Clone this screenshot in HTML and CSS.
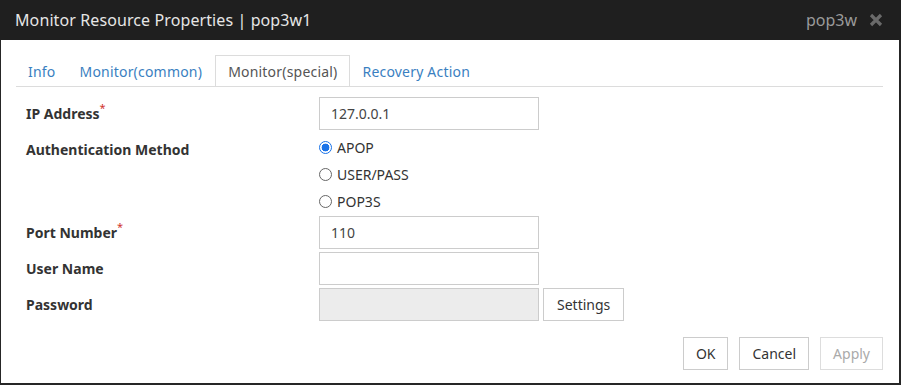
FILE: index.html
```html
<!DOCTYPE html>
<html lang="en">
<head>
    <meta charset="UTF-8">
    <title>Monitor Resource Properties</title>
    <link rel="stylesheet" href="styles.css">
</head>
<body>
	<div class="dialog">
		<div class="titleBar">
			<span class="titleText">Monitor Resource Properties | pop3w1</span>
			<span class="titleRight">
				<span class="resName">pop3w</span>
				<svg class="closeIcon" width="14" height="14" viewBox="0 0 14 14">
					<path d="M2 2 L12 12 M12 2 L2 12" stroke="#6a6a6a" stroke-width="3.2" stroke-linecap="butt"/>
				</svg>
			</span>
		</div>
		<div class="dialogBody">
			<ul class="tabs">
				<li class="tab">Info</li>
				<li class="tab">Monitor(common)</li>
				<li class="tab active">Monitor(special)</li>
				<li class="tab">Recovery Action</li>
			</ul>
			<div class="form">
				<div class="row">
					<label class="lbl">IP Address<sup class="req">*</sup></label>
					<div class="field"><div class="input">127.0.0.1</div></div>
				</div>
				<div class="row radioRow">
					<label class="lbl">Authentication Method</label>
					<div class="field radios">
						<div class="radio"><span class="dot checked"></span>APOP</div>
						<div class="radio"><span class="dot"></span>USER/PASS</div>
						<div class="radio"><span class="dot"></span>POP3S</div>
					</div>
				</div>
				<div class="row">
					<label class="lbl">Port Number<sup class="req">*</sup></label>
					<div class="field"><div class="input">110</div></div>
				</div>
				<div class="row">
					<label class="lbl">User Name</label>
					<div class="field"><div class="input"></div></div>
				</div>
				<div class="row">
					<label class="lbl">Password</label>
					<div class="field">
						<div class="input disabled"></div>
						<button class="btn">Settings</button>
					</div>
				</div>
			</div>
			<div class="footer">
				<button class="btn">OK</button>
				<button class="btn">Cancel</button>
				<button class="btn off">Apply</button>
			</div>
		</div>
	</div>
</body>
</html>
```

FILE: styles.css
```css
body,html{
	margin: 0;
	padding: 0;
	background: #fff;
	font-family: "Noto Sans", "Open Sans", sans-serif;
	font-size: 14px;
	color: #333;
}
.dialog{
	width: 901px;
	height: 385px;
	box-sizing: border-box;
	border-left: 1px solid #262626;
	border-right: 2px solid #262626;
	border-bottom: 2px solid #262626;
	background: #fff;
}
.titleBar{
	height: 40px;
	background: #1f1f1f;
	display: flex;
	align-items: center;
	justify-content: space-between;
	padding: 0 18px 0 15px;
	margin-left: -1px;
	margin-right: -2px;
}
.titleText{
	color: #e6e6e6;
	font-size: 16px;
	letter-spacing: 0.1px;
}
.titleRight{
	display: flex;
	align-items: center;
	gap: 12px;
}
.resName{
	color: #9a9a9a;
	font-size: 16px;
}
.closeIcon{
	display: block;
}
.dialogBody{
	padding: 15px 16px 0 15px;
}
.tabs{
	list-style: none;
	margin: 0;
	padding: 0;
	display: flex;
	border-bottom: 1px solid #dcdcdc;
	height: 31px;
}
.tab{
	padding: 0 11px;
	line-height: 28px;
	margin-top: 2px;
	color: #3a7fc1;
	letter-spacing: 0.2px;
	border: 1px solid transparent;
	border-bottom: none;
}
.tab.active{
	color: #555;
	background: #fff;
	border-color: #dcdcdc;
	height: 30px;
	margin-top: 0;
	line-height: 32px;
	margin-left: 1px;
	padding: 0 12px;
}
.form{
	margin-top: 10px;
	padding-left: 10px;
}
.row{
	display: flex;
	align-items: flex-start;
	margin-bottom: 3px;
}
.lbl{
	width: 293px;
	font-weight: bold;
	line-height: 33px;
	height: 33px;
}
.req{
	color: #d0342c;
	font-size: 11px;
	vertical-align: top;
	line-height: 22px;
	font-weight: normal;
}
.field{
	display: flex;
	gap: 4px;
}
.input{
	width: 200px;
	height: 31px;
	border: 1px solid #ccc;
	padding: 0 7px 0 11px;
	line-height: 31px;
	color: #444;
}
.input.disabled{
	background: #ececec;
}
.radioRow{
	margin-bottom: 1px;
}
.radioRow .lbl{
	line-height: 34px;
}
.radios{
	flex-direction: column;
	gap: 0;
	padding-top: 1px;
}
.radio{
	display: flex;
	align-items: center;
	height: 27px;
	line-height: 27px;
	color: #333;
}
.dot{
	width: 11px;
	height: 11px;
	border: 1px solid #666;
	border-radius: 50%;
	margin-right: 5px;
	box-sizing: content-box;
	background: #fff;
}
.dot.checked{
	border-color: #1a73e8;
	background: radial-gradient(circle, #1a73e8 0 3.6px, #fff 4.2px);
}
.btn{
	font-family: inherit;
	font-size: 14px;
	color: #333;
	background: #fff;
	border: 1px solid #ccc;
	height: 33px;
	padding: 0 13px;
	cursor: pointer;
}
.footer{
	display: flex;
	justify-content: flex-end;
	gap: 11px;
	margin-top: 16px;
}
.footer .btn{
	height: 33px;
	padding: 0 12px;
}
.btn.off{
	color: #aaa;
	border-color: #ddd;
}
```
